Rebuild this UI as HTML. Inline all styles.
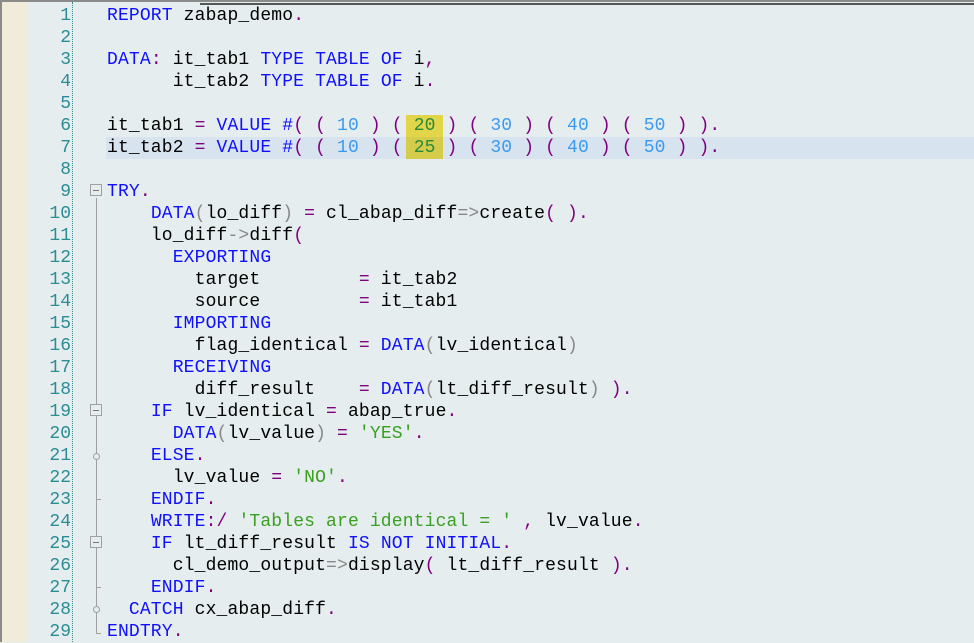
<!DOCTYPE html>
<html><head><meta charset="utf-8"><style>
html,body{margin:0;padding:0}
body{width:974px;height:642px;overflow:hidden;background:#e5edef;position:relative;font-family:"Liberation Mono","Courier New","DejaVu Sans Mono",monospace;font-size:18px}
.top{position:absolute;left:0;top:0;width:974px;height:2px;background:#8a8a8a}
.top2{position:absolute;left:200px;top:3px;width:774px;height:2px;background:#555}
.lb{position:absolute;left:0;top:0;width:2px;height:642px;background:#8a8a8a}
.beige{position:absolute;left:2px;top:2px;width:25px;height:640px;background:#f1ebd9}
.dot{position:absolute;left:72px;top:2px;height:640px;border-left:1px dotted #3a8a8a}
.hl{position:absolute;left:106px;top:137px;width:868px;height:22px;background:#d8e3f0}
.y{position:absolute;top:115px;left:406px;width:37px;height:44px;background:#e3d54a}
.y2{position:absolute;top:137px;left:406px;width:37px;height:22px;background:#d6cc4c}
.nums{position:absolute;left:27px;top:5px;width:44px;text-align:right;color:#2a8c94;line-height:22px}
.code{position:absolute;left:107px;top:5px;line-height:22px;white-space:pre;color:#000;letter-spacing:0.15px}
.k{color:#1010ff}.p{color:#800080}.n{color:#3a9af0}.s{color:#3aa020}.g{color:#888}
.fl{position:absolute;left:96px;width:1px;background:#a0a0a0}
.box{position:absolute;left:90px;width:10px;height:10px;border:1px solid #a0a0a0;background:#e5edef}
.box:after{content:"";position:absolute;left:2px;top:5px;width:6px;height:1px;background:#777}
.c{position:absolute;left:93px;width:5px;height:5px;border:1px solid #a0a0a0;border-radius:50%;background:#e5edef}
.t{position:absolute;left:96px;width:5px;height:1px;background:#a0a0a0}
</style></head><body>
<div class="top"></div><div class="top2"></div><div class="lb"></div><div class="beige"></div><div class="dot"></div>
<div class="hl"></div><div class="y"></div><div class="y2"></div>
<div class="fl" style="top:198px;height:436px"></div>
<div class="box" style="top:184px"></div>
<div class="box" style="top:404px"></div>
<div class="box" style="top:536px"></div>
<div class="c" style="top:453px"></div>
<div class="c" style="top:606px"></div>
<div class="t" style="top:499px"></div>
<div class="t" style="top:587px"></div>
<div class="t" style="top:633px"></div>
<div class="nums">1<br>2<br>3<br>4<br>5<br>6<br>7<br>8<br>9<br>10<br>11<br>12<br>13<br>14<br>15<br>16<br>17<br>18<br>19<br>20<br>21<br>22<br>23<br>24<br>25<br>26<br>27<br>28<br>29</div>
<div class="code"><span class="k">REPORT</span> zabap_demo<span class="p">.</span>

<span class="k">DATA</span><span class="p">:</span> it_tab1 <span class="k">TYPE</span> <span class="k">TABLE</span> <span class="k">OF</span> i<span class="p">,</span>
      it_tab2 <span class="k">TYPE</span> <span class="k">TABLE</span> <span class="k">OF</span> i<span class="p">.</span>

it_tab1 <span class="p">=</span> <span class="k">VALUE</span> <span class="k">#</span><span class="p">(</span> <span class="p">(</span> <span class="n">10</span> <span class="p">)</span> <span class="p">(</span> <span class="n" style="color:#2a8a3a">20</span> <span class="p">)</span> <span class="p">(</span> <span class="n">30</span> <span class="p">)</span> <span class="p">(</span> <span class="n">40</span> <span class="p">)</span> <span class="p">(</span> <span class="n">50</span> <span class="p">)</span> <span class="p">).</span>
it_tab2 <span class="p">=</span> <span class="k">VALUE</span> <span class="k">#</span><span class="p">(</span> <span class="p">(</span> <span class="n">10</span> <span class="p">)</span> <span class="p">(</span> <span class="n" style="color:#2a8a3a">25</span> <span class="p">)</span> <span class="p">(</span> <span class="n">30</span> <span class="p">)</span> <span class="p">(</span> <span class="n">40</span> <span class="p">)</span> <span class="p">(</span> <span class="n">50</span> <span class="p">)</span> <span class="p">).</span>

<span class="k">TRY</span><span class="p">.</span>
    <span class="k">DATA</span><span class="g">(</span>lo_diff<span class="g">)</span> <span class="p">=</span> cl_abap_diff<span class="g">=&gt;</span>create<span class="p">(</span> <span class="p">).</span>
    lo_diff<span class="g">-&gt;</span>diff<span class="p">(</span>
      <span class="k">EXPORTING</span>
        target         <span class="p">=</span> it_tab2
        source         <span class="p">=</span> it_tab1
      <span class="k">IMPORTING</span>
        flag_identical <span class="p">=</span> <span class="k">DATA</span><span class="g">(</span>lv_identical<span class="g">)</span>
      <span class="k">RECEIVING</span>
        diff_result    <span class="p">=</span> <span class="k">DATA</span><span class="g">(</span>lt_diff_result<span class="g">)</span> <span class="p">).</span>
    <span class="k">IF</span> lv_identical <span class="p">=</span> abap_true<span class="p">.</span>
      <span class="k">DATA</span><span class="g">(</span>lv_value<span class="g">)</span> <span class="p">=</span> <span class="s">'YES'</span><span class="p">.</span>
    <span class="k">ELSE</span><span class="p">.</span>
      lv_value <span class="p">=</span> <span class="s">'NO'</span><span class="p">.</span>
    <span class="k">ENDIF</span><span class="p">.</span>
    <span class="k">WRITE</span><span class="p">:/</span> <span class="s">'Tables are identical = '</span> <span class="p">,</span> lv_value<span class="p">.</span>
    <span class="k">IF</span> lt_diff_result <span class="k">IS</span> <span class="k">NOT</span> <span class="k">INITIAL</span><span class="p">.</span>
      cl_demo_output<span class="g">=&gt;</span>display<span class="p">(</span> lt_diff_result <span class="p">).</span>
    <span class="k">ENDIF</span><span class="p">.</span>
  <span class="k">CATCH</span> cx_abap_diff<span class="p">.</span>
<span class="k">ENDTRY</span><span class="p">.</span></div>
</body></html>
